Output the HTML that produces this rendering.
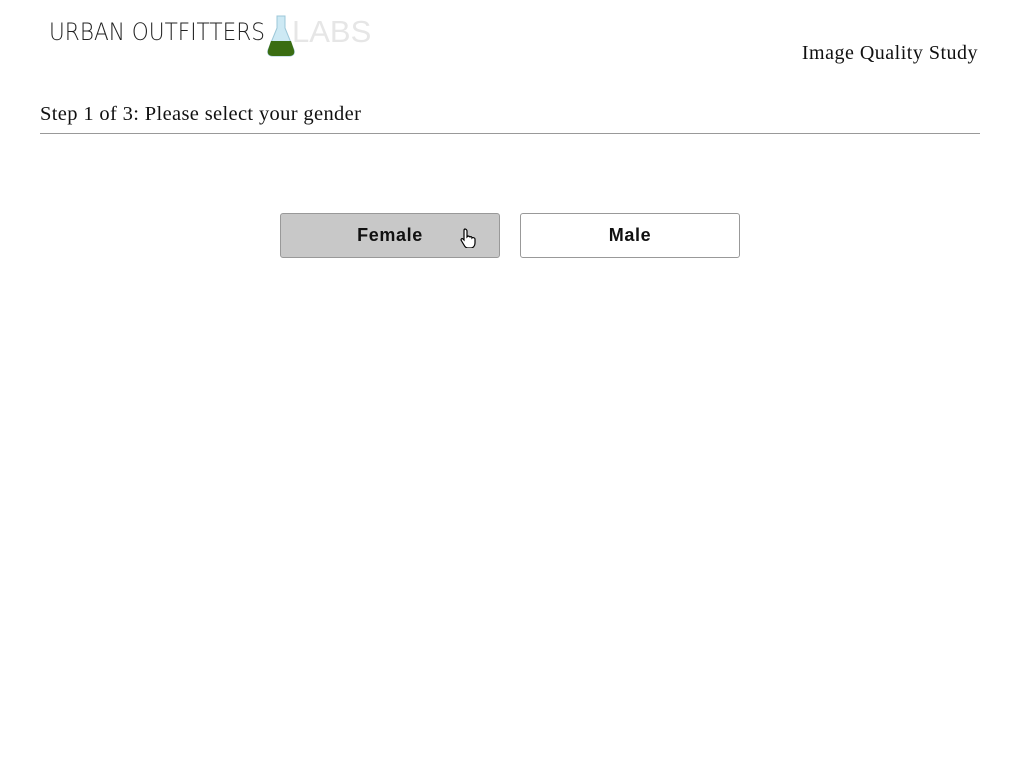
<!DOCTYPE html>
<html><head><meta charset="utf-8"><style>
body{margin:0;width:1024px;height:768px;background:#fff;position:relative;overflow:hidden}
.logo{position:absolute;left:49px;top:18px;font-family:"DejaVu Sans","Liberation Sans",sans-serif;font-weight:200;font-size:24px;letter-spacing:0;color:#222;transform:scaleX(0.9);transform-origin:left top;white-space:nowrap}
.labs{position:absolute;left:292px;top:14px;font-family:"Liberation Sans",sans-serif;font-size:31px;color:#e6e6e6;font-weight:normal}
.title{position:absolute;right:46px;top:42px;font-family:"Liberation Serif",serif;font-size:20px;letter-spacing:0.5px;color:#111}
.step{position:absolute;left:40px;top:103px;font-family:"Liberation Serif",serif;font-size:20.5px;letter-spacing:0.35px;color:#111}
.rule{position:absolute;left:40px;top:133px;width:940px;height:1px;background:#999}
.btn{position:absolute;top:213px;width:218px;height:43px;border:1px solid #999;border-radius:3px;font-family:"Liberation Sans",sans-serif;font-weight:bold;font-size:18px;letter-spacing:.6px;line-height:43px;text-align:center;color:#111}
</style></head><body>
<div class="logo">URBAN OUTFITTERS</div>
<svg style="position:absolute;left:266px;top:15px" width="30" height="42" viewBox="0 0 30 42">
<path d="M11 1h8v12l9 22c1 4-1 6-5 6H7c-4 0-6-2-5-6l9-22z" fill="#cde9f4" stroke="#9cc7d8"/>
<path d="M5 26h20l3 9c1 4-1 6-5 6H7c-4 0-6-2-5-6z" fill="#3a6d12"/>
</svg>
<div class="labs">LABS</div>
<div class="title">Image Quality Study</div>
<div class="step">Step 1 of 3: Please select your gender</div>
<div class="rule"></div>
<div class="btn" style="left:280px;background:#c8c8c8">Female</div>
<div class="btn" style="left:520px;background:#fff">Male</div>
<svg style="position:absolute;left:460px;top:228px" width="17" height="20" viewBox="0 0 17 20">
<path d="M5 1c1 0 2 1 2 2v6l1-1c1 0 2 1 2 1 1-1 2 0 2 1 1-1 3 0 3 1v4c0 3-2 5-4 5H8c-2 0-3-1-4-3L1 12c0-1 1-2 2-1l1 1V3c0-1 0-2 1-2z" fill="#fff" stroke="#000" stroke-width="1.2"/>
</svg>
</body></html>
